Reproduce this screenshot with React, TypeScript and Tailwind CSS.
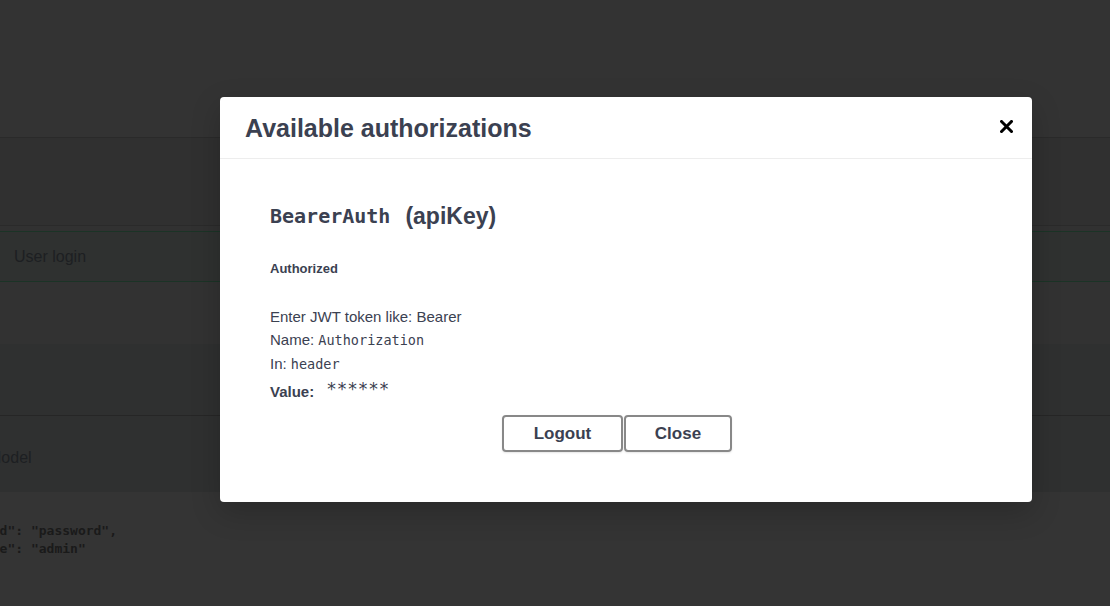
import React from "react";

const sans = { fontFamily: '"Liberation Sans", Arial, sans-serif' };
const mono = { fontFamily: '"DejaVu Sans Mono", monospace' };

export default function App() {
  return (
    <div className="relative w-[1110px] h-[606px] overflow-hidden bg-[#343434]" style={sans}>
      {/* dimmed page behind the modal */}
      <div className="h-[137px] bg-[#333333]" />
      <div className="h-[88px] border-t border-[#2a2a2a] bg-[#303030]" />
      <div className="h-[6px] border-t border-[#2a2a2a] bg-[#313131]" />
      <div className="h-[51px] border-y border-[#1b3326] bg-[#2f3130] flex items-center pl-[14px]">
        <span className="text-[16px] text-[#1d1f22]">User login</span>
      </div>
      <div className="h-[62px] bg-[#323232]" />
      <div className="h-[72px] border-b border-[#262626] bg-[#2f3030]" />
      <div className="h-[76px] bg-[#2f3030] flex items-center pt-[8px]">
        <span className="ml-[-12px] text-[16px] text-[#1d1f22]">Model</span>
      </div>
      <div className="pt-[30px] bg-[#343434] font-bold text-[13px] leading-[18px] text-[#1a1a1a]" style={mono}>
        <div className="ml-[-63px] whitespace-pre">"password": "password",</div>
        <div className="ml-[-63px] whitespace-pre">"username": "admin"</div>
      </div>

      {/* modal */}
      <div className="absolute left-[220px] top-[97px] w-[812px] h-[405px] bg-white rounded-[4px] shadow-[0_10px_30px_0_rgba(0,0,0,0.2)] flex flex-col">
        <div className="h-[62px] border-b border-[#ededed] flex items-center justify-between pl-[25px] pr-[19px]">
          <h3 className="text-[25px] font-bold text-[#3b4151] mt-[3px]">Available authorizations</h3>
          <button className="w-[13px] h-[13px] flex items-center justify-center mt-[-2px]">
            <svg width="13" height="13" viewBox="0 0 13 13">
              <path d="M1.5 1.5 L11.5 11.5 M11.5 1.5 L1.5 11.5" stroke="#000" strokeWidth="3" strokeLinecap="square" />
            </svg>
          </button>
        </div>
        <div className="pl-[50px] pt-[43px] text-[#3b4151]">
          <h4 className="h-[28px] flex items-center text-[23px] font-bold">
            <code className="text-[20px]" style={mono}>BearerAuth</code>
            <span className="ml-[15px]">(apiKey)</span>
          </h4>
          <div className="mt-[31px] h-[16px] flex items-center text-[13px] font-bold">Authorized</div>
          <div className="mt-[28px] h-[24px] flex items-center text-[15px]">Enter JWT token like: Bearer</div>
          <div className="h-[23px] flex items-center text-[15px]">
            Name:&nbsp;<code className="text-[13.5px]" style={mono}>Authorization</code>
          </div>
          <div className="h-[25px] flex items-center text-[15px]">
            In:&nbsp;<code className="text-[13.5px]" style={mono}>header</code>
          </div>
          <div className="h-[29px] flex items-center text-[15px] pt-[2px]">
            <span className="font-bold">Value:</span>
            <code className="ml-[12px] mt-[-6px] text-[17.5px]" style={mono}>******</code>
          </div>
        </div>
        <div className="flex justify-center gap-[1px] pr-[18px] mt-[9px]">
          <button className="w-[121px] h-[37px] border-2 border-[#888888] rounded-[4px] shadow-[0_1px_2px_rgba(0,0,0,0.1)] text-[17px] font-bold text-[#3b4151] bg-transparent">Logout</button>
          <button className="w-[108px] h-[37px] border-2 border-[#888888] rounded-[4px] shadow-[0_1px_2px_rgba(0,0,0,0.1)] text-[17px] font-bold text-[#3b4151] bg-transparent">Close</button>
        </div>
      </div>
    </div>
  );
}
